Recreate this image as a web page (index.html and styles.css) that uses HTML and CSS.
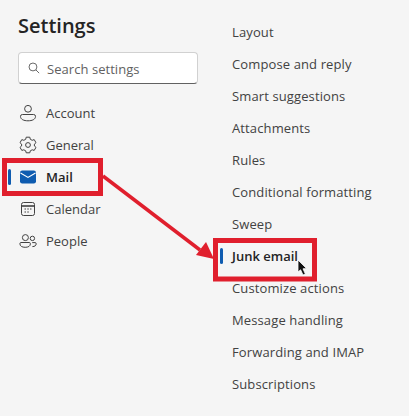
FILE: index.html
```html
<!DOCTYPE html>
<html lang="en">
<head>
    <meta charset="UTF-8">
    <meta name="viewport" content="width=device-width, initial-scale=1.0">
    <title>Settings</title>
    <link rel="stylesheet" href="styles.css">
</head>
<body>
    <div class="page">
        <aside class="side">
            <h1 class="title">Settings</h1>
            <div class="search">
                <svg class="search-icon" width="12" height="12" viewBox="0 0 14 14" fill="none" stroke="#616161" stroke-width="1.1">
                    <circle cx="5.8" cy="5.8" r="4.6"/>
                    <path d="M9.2 9.2 L13 13"/>
                </svg>
                <span class="search-text">Search settings</span>
            </div>
            <nav class="nav">
                <a class="nav-item">
                    <svg class="nav-icon" width="18" height="18" viewBox="0 0 18 18" fill="none" stroke="#424242" stroke-width="1">
                        <circle cx="9" cy="4.8" r="3.4"/>
                        <path d="M3.4 10.5 H14.6 A1.9 1.9 0 0 1 16.5 12.4 C16.5 15.4 13.2 16.8 9 16.8 C4.8 16.8 1.5 15.4 1.5 12.4 A1.9 1.9 0 0 1 3.4 10.5 Z"/>
                    </svg>
                    Account
                </a>
                <a class="nav-item">
                    <svg class="nav-icon" width="18" height="18" viewBox="0 0 18 18" fill="none" stroke="#424242" stroke-width="1">
                        <circle cx="9" cy="9" r="2.4"/>
                        <path d="M7.2 1.2 H10.8 L11.3 3.3 L13.2 4.3 L15.2 3.6 L17 6.7 L15.4 8.1 V10 L17 11.4 L15.2 14.4 L13.2 13.8 L11.3 14.8 L10.8 16.8 H7.2 L6.7 14.8 L4.8 13.8 L2.8 14.4 L1 11.4 L2.6 10 V8.1 L1 6.7 L2.8 3.6 L4.8 4.3 L6.7 3.3 Z" stroke-linejoin="round"/>
                    </svg>
                    General
                </a>
                <a class="nav-item active">
                    <svg class="nav-icon" width="18" height="18" viewBox="0 0 18 18">
                        <rect x="1" y="2.5" width="16" height="13" rx="2.2" fill="#0f5cb0"/>
                        <path d="M1.5 5 L9 9.4 L16.5 5" fill="none" stroke="#fff" stroke-width="1.2"/>
                    </svg>
                    Mail
                </a>
                <a class="nav-item">
                    <svg class="nav-icon" width="18" height="18" viewBox="0 0 18 18" fill="none" stroke="#424242" stroke-width="1">
                        <rect x="2.5" y="2.5" width="13" height="13" rx="2"/>
                        <path d="M2.5 6 H15.5" stroke-width="1.6"/>
                        <path d="M5.5 9 H7 M8.3 9 H9.8 M11 9 H12.5 M5.5 12 H7 M8.3 12 H9.8" stroke-width="1.2"/>
                    </svg>
                    Calendar
                </a>
                <a class="nav-item">
                    <svg class="nav-icon" width="18" height="18" viewBox="0 0 18 18" fill="none" stroke="#424242" stroke-width="1">
                        <circle cx="6.4" cy="5.6" r="3"/>
                        <circle cx="13.4" cy="6.4" r="2.2"/>
                        <path d="M2 10.5 H10.2 A1.2 1.2 0 0 1 11.4 11.7 C11.4 14.2 9.2 15.3 6.2 15.3 C3.2 15.3 0.9 14.2 0.9 11.7 A1.2 1.2 0 0 1 2 10.5 Z"/>
                        <path d="M13.4 14.6 C15.8 14.6 17.2 13.5 17.2 11.8 A1.2 1.2 0 0 0 16 10.6 H13.2"/>
                    </svg>
                    People
                </a>
            </nav>
        </aside>
        <main class="options">
            <a class="option">Layout</a>
            <a class="option">Compose and reply</a>
            <a class="option">Smart suggestions</a>
            <a class="option">Attachments</a>
            <a class="option">Rules</a>
            <a class="option">Conditional formatting</a>
            <a class="option">Sweep</a>
            <a class="option active">Junk email</a>
            <a class="option">Customize actions</a>
            <a class="option">Message handling</a>
            <a class="option">Forwarding and IMAP</a>
            <a class="option">Subscriptions</a>
        </main>
    </div>

    <!-- red callouts drawn over the page -->
    <svg class="callout" width="409" height="416" viewBox="0 0 409 416" fill="none">
        <rect x="4.5" y="160.5" width="96" height="33" stroke="#e01f2d" stroke-width="5"/>
        <rect x="215.5" y="240.5" width="99" height="38.5" stroke="#e01f2d" stroke-width="5"/>
        <path d="M103 176 L200 250" stroke="#e01f2d" stroke-width="3.5"/>
        <path d="M214 259 L196 255 L206 242 Z" fill="#e01f2d"/>
        <path d="M298 260 V272 L300.6 269.8 L303 275 L305.4 274 L303 268.8 L306.6 268.6 Z" fill="#111" stroke="#fff" stroke-width="0.8"/>
    </svg>
</body>
</html>
```

FILE: styles.css
```css
body {
    margin: 0;
    padding: 0;
    background-color: #f5f5f5;
    font-family: "Open Sans", "Noto Sans", sans-serif;
    color: #424242;
    overflow: hidden;
}
.page {
    display: flex;
    width: 409px;
    height: 416px;
}
.side {
    width: 216px;
    box-sizing: border-box;
    padding: 14px 18px 0 18px;
}
.title {
    margin: 0;
    height: 24px;
    line-height: 24px;
    font-size: 20px;
    font-weight: 600;
    color: #242424;
}
.search {
    display: flex;
    align-items: center;
    gap: 7px;
    height: 32px;
    box-sizing: border-box;
    margin-top: 14px;
    padding-left: 9px;
    background-color: #fff;
    border: 1px solid #d1d1d1;
    border-bottom-color: #616161;
    border-radius: 4px;
    font-size: 13px;
    letter-spacing: 0.05px;
    color: #616161;
}
.search-text {
    padding-top: 2px;
}
.nav {
    margin: 13px 0 0 -18px;
}
.nav-item {
    position: relative;
    display: flex;
    align-items: center;
    gap: 9px;
    height: 32px;
    padding-left: 19px;
    font-size: 13px;
}
.nav-item.active {
    font-weight: 600;
    color: #242424;
}
.nav-item.active::before {
    content: "";
    position: absolute;
    left: 8px;
    top: 8px;
    width: 3px;
    height: 16px;
    border-radius: 2px;
    background-color: #0f5cb0;
}
.options {
    flex: 1;
    padding-top: 16px;
}
.option {
    position: relative;
    display: flex;
    align-items: center;
    height: 32px;
    padding-left: 16px;
    font-size: 13px;
    letter-spacing: 0.12px;
}
.option.active {
    font-weight: 600;
    letter-spacing: 0;
    color: #242424;
}
.option.active::before {
    content: "";
    position: absolute;
    left: 4px;
    top: 8px;
    width: 3px;
    height: 16px;
    border-radius: 2px;
    background-color: #0f5cb0;
}
.callout {
    position: absolute;
    left: 0;
    top: 0;
}
```
